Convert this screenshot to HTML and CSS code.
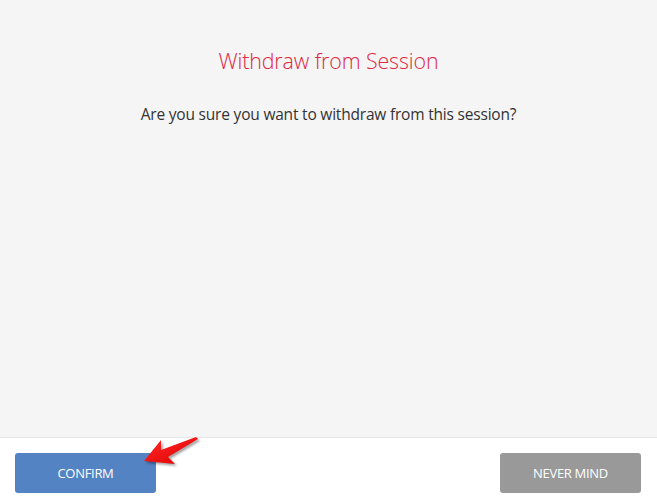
FILE: index.html
```html
<!DOCTYPE html>
<html>
<head>
<meta charset="utf-8">
<link rel="stylesheet" href="styles.css">
</head>
<body>
<div class="dialog">
  <div class="content">
    <h1 class="title">Withdraw from Session</h1>
    <p class="message">Are you sure you want to withdraw from this session?</p>
  </div>
  <div class="footer">
    <button class="btn btn-confirm">CONFIRM</button>
    <button class="btn btn-cancel">NEVER MIND</button>
    <svg class="arrow" width="70" height="40" viewBox="0 0 70 40">
      <defs>
        <linearGradient id="g" x1="0" y1="0" x2="1" y2="1">
          <stop offset="0" stop-color="#ff2a2a"/>
          <stop offset="1" stop-color="#e00000"/>
        </linearGradient>
      </defs>
      <path d="M3 27 L20 6 L20 16 L55 3 L57 5 L27 23 L34 30 Z" fill="url(#g)" style="filter: drop-shadow(2px 2px 1px rgba(0,0,0,0.35));"/>
    </svg>
  </div>
</div>
</body>
</html>
```
FILE: styles.css
```css
html, body {
  margin: 0;
  padding: 0;
}
body {
  width: 657px;
  height: 504px;
  font-family: "Open Sans", "Noto Sans", sans-serif;
  background: #fff;
}
.dialog {
  display: flex;
  flex-direction: column;
  height: 504px;
}
.content {
  background: #f5f5f5;
  border-bottom: 1px solid #e6e6e6;
  box-sizing: border-box;
  height: 438px;
  text-align: center;
  padding-top: 46px;
}
.title {
  margin: 0;
  font-size: 21.4px;
  font-weight: 300;
  color: #e0263f;
  line-height: 30px;
  letter-spacing: -0.1px;
}
.message {
  margin: 27px 0 0;
  font-size: 15.5px;
  color: #333;
  line-height: 22px;
  letter-spacing: -0.2px;
}
.footer {
  position: relative;
  flex: 1;
  display: flex;
  justify-content: space-between;
  align-items: flex-start;
  padding: 15px 16px 0 15px;
  background: #fff;
}
.btn {
  width: 141px;
  height: 40px;
  border: none;
  border-radius: 3px;
  color: #fff;
  font-family: "Open Sans", "Noto Sans", sans-serif;
  font-size: 13px;
  letter-spacing: -0.3px;
  padding: 0;
}
.btn-confirm {
  background: #5483c3;
}
.btn-cancel {
  background: #999999;
}
.arrow {
  position: absolute;
  left: 141px;
  top: -4px;
}
```
